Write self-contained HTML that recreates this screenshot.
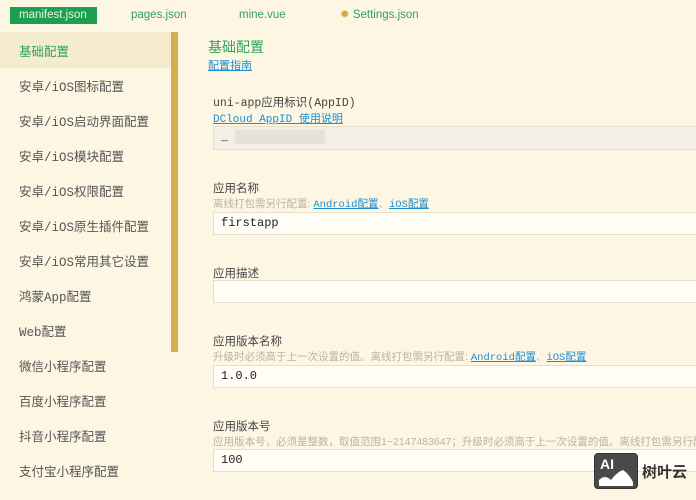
<!DOCTYPE html>
<html><head><meta charset="utf-8"><style>
body{margin:0;width:696px;height:500px;overflow:hidden;background:#fdf6e3;font-family:"Liberation Sans","Noto Sans CJK SC",sans-serif;position:relative}
.a{position:absolute;white-space:nowrap}
.tab{top:7px;height:17px;font-size:11.5px;color:#2ea35a;line-height:17px}
.side{left:19px;font-size:12.5px;color:#555;font-family:"Liberation Mono","Noto Sans CJK SC",monospace}
.lbl{left:213px;font-size:11.5px;color:#444}
.hint{left:213px;font-size:10.5px;color:#b9b3a2}
.hint a,.lk{color:#1b8fd0;text-decoration:underline;font-family:"Liberation Mono","Noto Sans CJK SC",monospace}
.inp{left:213px;width:490px;height:21px;border:1px solid #e6dfcb;background:#fffdf6;font-family:"Liberation Mono","Noto Sans CJK SC",monospace;font-size:12px;color:#222;line-height:21px;padding-left:7px;box-sizing:border-box}
</style></head><body>
<div class="a tab" style="left:10px;width:87px;background:#1e9e4f;color:#e8f5e9;padding-left:9px;box-sizing:border-box">manifest.json</div>
<div class="a tab" style="left:131px">pages.json</div>
<div class="a tab" style="left:239px">mine.vue</div>
<div class="a tab" style="left:340px"><span style="color:#d9a73e">✹</span> Settings.json</div>
<div class="a" style="left:0;top:32px;width:171px;height:36px;background:#f5ebcf"></div>
<div class="a" style="left:171px;top:32px;width:7px;height:320px;background:#d7ad52"></div>
<div class="a side" style="top:41px;color:#2ea35a;font-family:'Noto Sans CJK SC',sans-serif">基础配置</div>
<div class="a side" style="top:76px">安卓/iOS图标配置</div>
<div class="a side" style="top:111px">安卓/iOS启动界面配置</div>
<div class="a side" style="top:146px">安卓/iOS模块配置</div>
<div class="a side" style="top:181px">安卓/iOS权限配置</div>
<div class="a side" style="top:216px">安卓/iOS原生插件配置</div>
<div class="a side" style="top:251px">安卓/iOS常用其它设置</div>
<div class="a side" style="top:286px">鸿蒙App配置</div>
<div class="a side" style="top:321px">Web配置</div>
<div class="a side" style="top:356px">微信小程序配置</div>
<div class="a side" style="top:391px">百度小程序配置</div>
<div class="a side" style="top:426px">抖音小程序配置</div>
<div class="a side" style="top:461px">支付宝小程序配置</div>
<div class="a" style="left:208px;top:37px;font-size:14px;color:#2ea35a">基础配置</div>
<div class="a" style="left:208px;top:57px;font-size:11px;color:#1b8fd0;text-decoration:underline">配置指南</div>
<div class="a lbl" style="top:94px;font-family:'Liberation Mono','Noto Sans CJK SC',monospace">uni-app应用标识(AppID)</div>
<div class="a lk" style="left:213px;top:110px;font-size:11px">DCloud AppID 使用说明</div>
<div class="a inp" style="top:126px;height:24px;background:#f3efe6">_ <span style="display:inline-block;width:90px;height:14px;background:#e6e2da;vertical-align:middle"></span></div>
<div class="a lbl" style="top:180px">应用名称</div>
<div class="a hint" style="top:196px">离线打包需另行配置: <a>Android配置</a>、<a>iOS配置</a></div>
<div class="a inp" style="top:212px;height:23px">firstapp</div>
<div class="a lbl" style="top:265px">应用描述</div>
<div class="a inp" style="top:280px;height:23px"></div>
<div class="a lbl" style="top:333px">应用版本名称</div>
<div class="a hint" style="top:349px">升级时必须高于上一次设置的值。离线打包需另行配置: <a>Android配置</a>、<a>iOS配置</a></div>
<div class="a inp" style="top:365px;height:23px">1.0.0</div>
<div class="a lbl" style="top:418px">应用版本号</div>
<div class="a hint" style="top:434px">应用版本号，必须是整数，取值范围1~2147483647；升级时必须高于上一次设置的值。离线打包需另行配置</div>
<div class="a inp" style="top:449px;height:23px">100</div>
<div class="a" style="left:594px;top:453px;width:44px;height:36px;background:#4a4a4a;border-radius:4px;border:1px solid #333;box-sizing:border-box">
<div class="a" style="left:5px;top:2px;font-size:14px;font-weight:bold;color:#fff">AI</div>
<svg class="a" style="left:2px;top:14px" width="38" height="20"><path d="M2 18 L2 12 Q8 6 14 12 Q20 4 26 2 Q32 6 36 14 L36 18 Z" fill="#fff"/></svg></div>
<div class="a" style="left:642px;top:461px;font-size:15px;font-weight:bold;color:#333">树叶云</div>
</body></html>
